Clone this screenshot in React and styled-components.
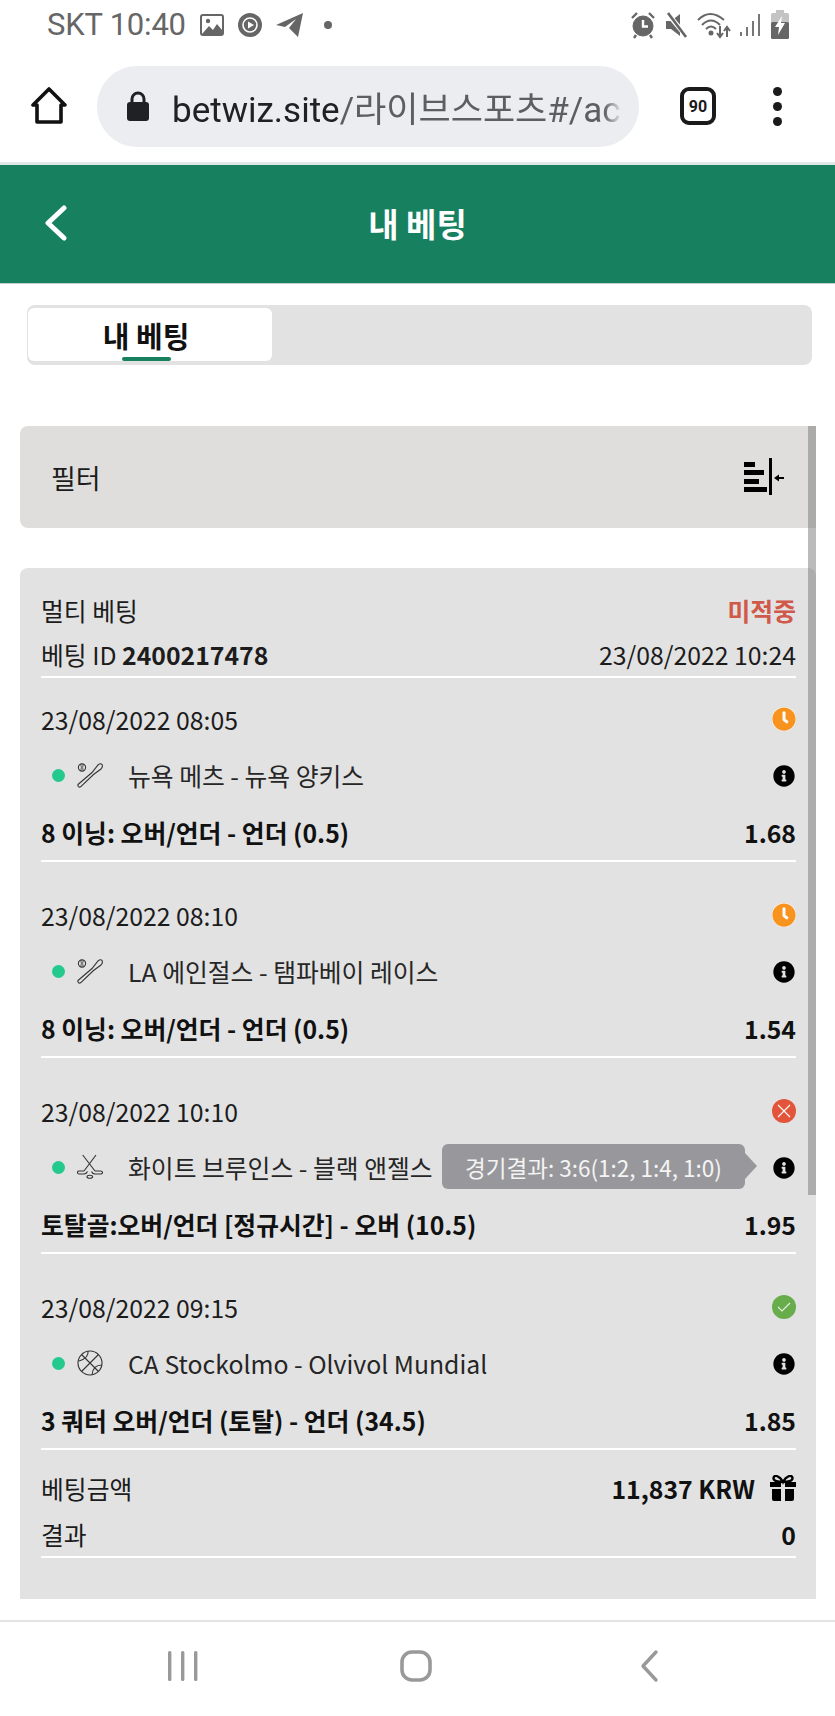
import styled, { createGlobalStyle } from 'styled-components';
import { FaClock, FaInfoCircle } from 'react-icons/fa';

const GlobalStyle = createGlobalStyle`
  html, body {
    margin: 0;
    padding: 0;
    background: #fff;
  }
  * {
    box-sizing: border-box;
  }
`;

const KR = `"Noto Sans CJK KR", "Noto Sans", sans-serif`;

const Page = styled.div`
  width: 835px;
  height: 1716px;
  overflow: hidden;
  display: flex;
  flex-direction: column;
  background: #fff;
  font-family: ${KR};
  color: #1c1c1c;
`;

const StatusBar = styled.div`
  height: 50px;
  flex: none;
  display: flex;
  align-items: center;
  padding: 0 46px 1px 47px;
  color: #666;
`;
const StatusText = styled.span`
  font-family: Roboto, sans-serif;
  font-size: 31px;
  margin-right: 14px;
  letter-spacing: -0.2px;
`;
const StatusIcons = styled.div`
  display: flex;
  align-items: center;
  gap: ${(p) => p.$gap}px;
  margin-left: ${(p) => (p.$right ? 'auto' : '0')};
`;

const Toolbar = styled.div`
  height: 112px;
  flex: none;
  display: flex;
  align-items: center;
  padding-left: 31px;
`;
const Omnibox = styled.div`
  width: 542px;
  height: 81px;
  margin-left: 30px;
  border-radius: 40px;
  background: #ebedf0;
  display: flex;
  align-items: center;
  padding-left: 30px;
`;
const UrlText = styled.div`
  width: 450px;
  margin-left: 23px;
  overflow: hidden;
  white-space: nowrap;
  font-family: Roboto, "Noto Sans CJK KR", sans-serif;
  font-size: 35px;
  color: #5c5e61;
  mask-image: linear-gradient(to right, #000 96%, transparent 100%);
`;
const UrlHost = styled.span`
  color: #202124;
`;
const TabCount = styled.div`
  width: 36px;
  height: 38px;
  margin-left: 41px;
  border: 4px solid #1a1a1a;
  border-radius: 9px;
  display: flex;
  align-items: center;
  justify-content: center;
  font-family: Roboto, sans-serif;
  font-weight: 700;
  font-size: 16px;
  color: #1a1a1a;
`;
const MenuDots = styled.div`
  margin-left: 57px;
  display: flex;
  flex-direction: column;
  gap: 6px;
`;
const MenuDot = styled.span`
  width: 9px;
  height: 9px;
  border-radius: 50%;
  background: #1a1a1a;
`;

const Header = styled.div`
  height: 122px;
  flex: none;
  display: flex;
  align-items: center;
  justify-content: center;
  position: relative;
  padding-bottom: 2px;
  background: #16805f;
  border-top: 3px solid #dfe8e4;
  border-bottom: 1px solid #c6cfcb;
  color: #fff;
  font-size: 33px;
  font-weight: 700;
`;
const BackButton = styled.div`
  position: absolute;
  left: 45px;
  top: 40px;
  display: flex;
`;

const TabBar = styled.div`
  height: 60px;
  flex: none;
  margin: 21px 23px 0 27px;
  padding: 3px 1px;
  border-radius: 8px;
  background: #e2e2e2;
  display: flex;
`;
const Tab = styled.div`
  width: 244px;
  height: 53px;
  padding-right: 8px;
  position: relative;
  border-radius: 6px;
  background: #fff;
  display: flex;
  align-items: center;
  justify-content: center;
  font-size: 29px;
  font-weight: 700;
  color: #111;
`;
const TabMark = styled.span`
  position: absolute;
  left: 94px;
  bottom: 0;
  width: 49px;
  height: 4px;
  border-radius: 2px;
  background: #16805f;
`;

const Content = styled.div`
  position: relative;
  margin: 61px 19px 0 20px;
  flex: none;
`;
const ScrollThumb = styled.div`
  position: absolute;
  right: 0;
  top: 0;
  width: 8px;
  height: 769px;
  background: rgba(120, 120, 120, 0.5);
`;
const FilterBar = styled.div`
  height: 102px;
  border-radius: 8px 0 0 8px;
  background: #dfdedd;
  display: flex;
  align-items: center;
  justify-content: space-between;
  padding: 0 32px 0 31px;
  font-size: 27px;
`;
const BetCard = styled.div`
  margin-top: 40px;
  padding: 20px 20px 41px 21px;
  border-radius: 8px 8px 0 0;
  background: #e2e2e2;
  font-size: 24.8px;
`;
const InfoRow = styled.div`
  height: ${(p) => (p.$line ? 46 : 44)}px;
  display: flex;
  align-items: center;
  justify-content: space-between;
  white-space: nowrap;
  border-bottom: ${(p) => (p.$line ? '2px solid #fff' : 'none')};
`;
const Status = styled.b`
  color: #d0594a;
  font-weight: 700;
`;
const BetBlock = styled.div`
  padding-top: ${(p) => (p.$first ? 14 : 26)}px;
  border-bottom: 2px solid #fff;
`;
const DateRow = styled.div`
  height: 54px;
  margin-bottom: 1px;
  display: flex;
  align-items: center;
  justify-content: space-between;
`;
const StatusBadge = styled.span`
  width: 24px;
  height: 24px;
  border-radius: 50%;
  background: ${(p) => p.$color};
  display: flex;
  align-items: center;
  justify-content: center;
`;
const EventRow = styled.div`
  height: 56px;
  position: relative;
  display: flex;
  align-items: center;
  padding-left: 11px;
  white-space: nowrap;
`;
const LiveDot = styled.span`
  width: 13px;
  height: 13px;
  margin-right: 12px;
  border-radius: 50%;
  background: #24c98d;
`;
const EventName = styled.span`
  margin-left: 25px;
  color: #262626;
`;
const InfoIcon = styled.span`
  margin-left: auto;
  margin-right: 1px;
  padding-top: 2px;
  display: flex;
  font-size: 22px;
  color: #000;
`;
const Tooltip = styled.div`
  position: absolute;
  right: 51px;
  top: 5px;
  width: 303px;
  height: 45px;
  border-radius: 6px;
  background: #98989c;
  color: #f4f4f4;
  font-size: 22.5px;
  display: flex;
  align-items: center;
  justify-content: center;
  &::after {
    content: '';
    position: absolute;
    left: 100%;
    top: 9px;
    border-style: solid;
    border-width: 13px 0 13px 12px;
    border-color: transparent transparent transparent #98989c;
  }
`;
const MarketRow = styled.div`
  height: 57px;
  display: flex;
  align-items: center;
  justify-content: space-between;
  font-weight: 700;
  color: #111;
`;
const Summary = styled.div`
  padding-top: 16px;
  display: flex;
  flex-direction: column;
  gap: 2px;
`;
const AmountValue = styled.b`
  display: flex;
  align-items: center;
  gap: 15px;
  font-weight: 700;
  color: #111;
`;

const NavBar = styled.div`
  height: 96px;
  margin-top: auto;
  flex: none;
  border-top: 2px solid #e4e4e4;
  display: flex;
  align-items: center;
  padding: 0 0 6px 168px;
`;
const NavSlot = styled.div`
  display: flex;
  margin-left: ${(p) => p.$gap}px;
`;

const ImageGlyph = () => (
  <svg width="24" height="22" viewBox="0 0 24 22">
    <rect x="1" y="1" width="22" height="20" rx="2" fill="none" stroke="#666" strokeWidth="2" />
    <circle cx="8" cy="7" r="2.2" fill="#666" />
    <path d="M2 20 L9 12 L13 16 L17 10 L22 16 V20 Z" fill="#666" />
  </svg>
);
const MusicGlyph = () => (
  <svg width="24" height="26" viewBox="0 0 24 26">
    <circle cx="12" cy="13" r="12" fill="#666" />
    <circle cx="12" cy="13" r="7" fill="none" stroke="#fff" strokeWidth="1.6" />
    <path d="M10 9.5 L16 13 L10 16.5 Z" fill="#fff" />
  </svg>
);
const SendGlyph = () => (
  <svg width="27" height="24" viewBox="0 0 27 24">
    <path d="M0 12 L27 0 L22 24 L13 15 L20 6 L9 14 Z" fill="#666" />
  </svg>
);
const AlarmGlyph = () => (
  <svg width="26" height="28" viewBox="0 0 26 28" fill="none" stroke="#666">
    <circle cx="13" cy="15" r="10" fill="#666" />
    <path d="M13 9 V15.5 H18" stroke="#fff" strokeWidth="2.4" />
    <path d="M2 7 L7 2 M24 7 L19 2 M6 24 L4 27 M20 24 L22 27" strokeWidth="2.4" />
  </svg>
);
const MuteGlyph = () => (
  <svg width="23" height="26" viewBox="0 0 23 26">
    <path d="M1 9 H6 L15 2 V24 L6 17 H1 Z" fill="#666" />
    <path d="M2 1 L22 25" stroke="#fff" strokeWidth="5" />
    <path d="M3 1 L21 25" stroke="#666" strokeWidth="2.6" />
  </svg>
);
const WifiGlyph = () => (
  <svg width="34" height="28" viewBox="0 0 34 28" fill="none" stroke="#666" strokeWidth="2">
    <path d="M1 9 Q13 -3 27 9" />
    <path d="M5 14 Q14 5 23 14" />
    <path d="M9 18 Q14 13 19 18" />
    <circle cx="14" cy="22" r="1.5" fill="#666" />
    <path d="M23 15 V26 M20 22 L23 26 L26 22 M30 26 V16 M27 20 L30 16 L33 20" />
  </svg>
);
const SignalGlyph = () => (
  <svg width="22" height="24" viewBox="0 0 22 24" fill="#777">
    <rect x="0" y="19" width="2" height="4" />
    <rect x="6" y="14" width="2" height="9" />
    <rect x="12" y="8" width="2" height="15" />
    <rect x="18" y="1" width="2" height="22" />
  </svg>
);
const BatteryGlyph = () => (
  <svg width="18" height="29" viewBox="0 0 18 29">
    <rect x="5" y="0" width="8" height="3" fill="#c4c4c4" />
    <rect x="0" y="3" width="18" height="26" rx="1.5" fill="#c4c4c4" />
    <rect x="0" y="12" width="18" height="17" rx="1.5" fill="#666" />
    <path d="M11 6 L4 17 H8 L7 25 L14 13 H10 Z" fill="#fff" />
  </svg>
);

const HomeGlyph = () => (
  <svg width="36" height="38" viewBox="0 0 36 38" fill="none" stroke="#111" strokeWidth="3.6" strokeLinejoin="round">
    <path d="M18 2 L2 18 H6 V35 H30 V18 H34 Z" />
  </svg>
);
const LockGlyph = () => (
  <svg width="22" height="30" viewBox="0 0 22 30">
    <path d="M5 12 V8 A6 6 0 0 1 17 8 V12" fill="none" stroke="#202124" strokeWidth="3" />
    <rect x="0" y="11" width="22" height="19" rx="3" fill="#202124" />
  </svg>
);
const ChevronGlyph = ({ width, height, color, weight }) => (
  <svg width={width} height={height} viewBox={`0 0 ${width} ${height}`} fill="none" stroke={color} strokeWidth={weight} strokeLinecap="round" strokeLinejoin="round">
    <path d={`M${width - 3} 3 L3 ${height / 2} L${width - 3} ${height - 3}`} />
  </svg>
);
const FilterGlyph = () => (
  <svg width="40" height="38" viewBox="0 0 40 38">
    <rect x="0" y="4" width="11" height="5" />
    <rect x="0" y="12" width="20" height="5" />
    <rect x="0" y="21" width="15" height="5" />
    <rect x="0" y="29" width="23" height="5" />
    <rect x="25" y="0" width="3" height="37" />
    <path d="M30 20 L35 16.5 V19 H40 V21 H35 V23.5 Z" />
  </svg>
);
const GiftGlyph = () => (
  <svg width="26" height="26" viewBox="0 0 26 26">
    <path d="M13 7 C10 1 4 -1 3.5 3 C3.2 6 8 7 13 7 C18 7 22.8 6 22.5 3 C22 -1 16 1 13 7 Z" fill="none" stroke="#000" strokeWidth="2.4" />
    <path d="M0 7 H11 V12 H0 Z M15 7 H26 V12 H15 Z" />
    <path d="M2 14 H11 V26 H4 Q2 26 2 24 Z M15 14 H24 V24 Q24 26 22 26 H15 Z" />
  </svg>
);

const BaseballGlyph = () => (
  <svg width="26" height="26" viewBox="0 0 26 26" fill="none" stroke="#333" strokeWidth="1.1">
    <circle cx="5" cy="5.5" r="3.6" />
    <path d="M3.8 2.4 Q5 5.5 3.8 8.6 M6.2 2.4 Q5 5.5 6.2 8.6" strokeWidth="0.8" />
    <path d="M1 22.5 L15 10.5 L21 3 Q23.5 0.8 25 2.4 Q26.2 4.5 24 7 L16.5 12.5 L3.6 24.8 Q2.4 25.6 1.4 24.6 Q0.6 23.6 1 22.5 Z" />
  </svg>
);
const HockeyGlyph = () => (
  <svg width="26" height="26" viewBox="0 0 26 26" fill="none" stroke="#333" strokeWidth="1.1">
    <path d="M5.7 1 L18 17 M19 1 L7 17" />
    <path d="M7 17 H2 Q0.5 17 0.5 18.5 Q0.5 20 2 20 H7 Q9.5 20 10.5 17.5" />
    <path d="M18 17 H23.5 Q25.5 17 25.5 18.5 Q25.5 20 23.5 20 H18 Q15.5 20 14.5 17.5" />
    <ellipse cx="12.8" cy="22.8" rx="2.8" ry="1.5" />
  </svg>
);
const BasketballGlyph = () => (
  <svg width="26" height="26" viewBox="0 0 26 26" fill="none" stroke="#333" strokeWidth="1.1">
    <circle cx="13" cy="13" r="12" />
    <path d="M4.5 4.5 L21.5 21.5 M21.5 4.5 L4.5 21.5" />
    <path d="M11 1.2 Q12 8 2 11 M24.8 15 Q16 15 15 24.8" />
  </svg>
);

const ClockBadge = () => (
  <StatusBadge $color="#fff">
    <FaClock size={24} color="#f7931e" />
  </StatusBadge>
);
const LostBadge = () => (
  <StatusBadge $color="#e2553a">
    <svg width="14" height="14" viewBox="0 0 14 14" stroke="#fff" strokeWidth="1.1">
      <path d="M1 1 L13 13 M13 1 L1 13" />
    </svg>
  </StatusBadge>
);
const WonBadge = () => (
  <StatusBadge $color="#67ad4b">
    <svg width="14" height="12" viewBox="0 0 14 12" fill="none" stroke="#e8f3e2" strokeWidth="1.1">
      <path d="M1 6 L5 10 L13 2" />
    </svg>
  </StatusBadge>
);

const bets = [
  { date: '23/08/2022 08:05', badge: <ClockBadge />, sport: <BaseballGlyph />, name: '뉴욕 메츠 - 뉴욕 양키스', market: '8 이닝: 오버/언더 - 언더 (0.5)', odds: '1.68' },
  { date: '23/08/2022 08:10', badge: <ClockBadge />, sport: <BaseballGlyph />, name: 'LA 에인절스 - 탬파베이 레이스', market: '8 이닝: 오버/언더 - 언더 (0.5)', odds: '1.54' },
  { date: '23/08/2022 10:10', badge: <LostBadge />, sport: <HockeyGlyph />, name: '화이트 브루인스 - 블랙 앤젤스', market: '토탈골:오버/언더 [정규시간] - 오버 (10.5)', odds: '1.95', tip: '경기결과: 3:6(1:2, 1:4, 1:0)' },
  { date: '23/08/2022 09:15', badge: <WonBadge />, sport: <BasketballGlyph />, name: 'CA Stockolmo - Olvivol Mundial', market: '3 쿼터 오버/언더 (토탈) - 언더 (34.5)', odds: '1.85' },
];

export default function App() {
  return (
    <Page>
      <GlobalStyle />
      <StatusBar>
        <StatusText>SKT 10:40</StatusText>
        <StatusIcons $gap={14}>
          <ImageGlyph />
          <MusicGlyph />
          <SendGlyph />
          <svg width="8" height="8" viewBox="0 0 8 8" style={{ marginLeft: 7 }}>
            <circle cx="4" cy="4" r="4" fill="#666" />
          </svg>
        </StatusIcons>
        <StatusIcons $right $gap={9}>
          <AlarmGlyph />
          <MuteGlyph />
          <WifiGlyph />
          <SignalGlyph />
          <BatteryGlyph />
        </StatusIcons>
      </StatusBar>

      <Toolbar>
        <HomeGlyph />
        <Omnibox>
          <LockGlyph />
          <UrlText>
            <UrlHost>betwiz.site</UrlHost>/라이브스포츠#/ac
          </UrlText>
        </Omnibox>
        <TabCount>90</TabCount>
        <MenuDots>
          <MenuDot />
          <MenuDot />
          <MenuDot />
        </MenuDots>
      </Toolbar>

      <Header>
        <BackButton>
          <ChevronGlyph width={22} height={36} color="#fff" weight={5} />
        </BackButton>
        내 베팅
      </Header>

      <TabBar>
        <Tab>
          내 베팅
          <TabMark />
        </Tab>
      </TabBar>

      <Content>
        <FilterBar>
          필터
          <FilterGlyph />
        </FilterBar>
        <BetCard>
          <InfoRow>
            <span>멀티 베팅</span>
            <Status>미적중</Status>
          </InfoRow>
          <InfoRow $line>
            <span>
              베팅 ID <b>2400217478</b>
            </span>
            <span>23/08/2022 10:24</span>
          </InfoRow>
          {bets.map((bet, i) => (
            <BetBlock key={bet.date} $first={i === 0}>
              <DateRow>
                <span>{bet.date}</span>
                {bet.badge}
              </DateRow>
              <EventRow>
                <LiveDot />
                {bet.sport}
                <EventName>{bet.name}</EventName>
                {bet.tip && <Tooltip>{bet.tip}</Tooltip>}
                <InfoIcon>
                  <FaInfoCircle />
                </InfoIcon>
              </EventRow>
              <MarketRow>
                <span>{bet.market}</span>
                <span>{bet.odds}</span>
              </MarketRow>
            </BetBlock>
          ))}
          <Summary>
            <InfoRow>
              <span>베팅금액</span>
              <AmountValue>
                11,837 KRW
                <GiftGlyph />
              </AmountValue>
            </InfoRow>
            <InfoRow $line>
              <span>결과</span>
              <AmountValue>0</AmountValue>
            </InfoRow>
          </Summary>
        </BetCard>
        <ScrollThumb />
      </Content>

      <NavBar>
        <NavSlot $gap={0}>
          <svg width="30" height="32" viewBox="0 0 30 32" fill="#999">
            <rect x="0" y="1" width="3.4" height="30" rx="1.5" />
            <rect x="13" y="1" width="3.4" height="30" rx="1.5" />
            <rect x="26" y="1" width="3.4" height="30" rx="1.5" />
          </svg>
        </NavSlot>
        <NavSlot $gap={202}>
          <svg width="32" height="32" viewBox="0 0 32 32" fill="none" stroke="#999" strokeWidth="3.6">
            <rect x="2" y="2" width="28" height="28" rx="10" />
          </svg>
        </NavSlot>
        <NavSlot $gap={208}>
          <ChevronGlyph width={19} height={34} color="#999" weight={3.4} />
        </NavSlot>
      </NavBar>
    </Page>
  );
}
